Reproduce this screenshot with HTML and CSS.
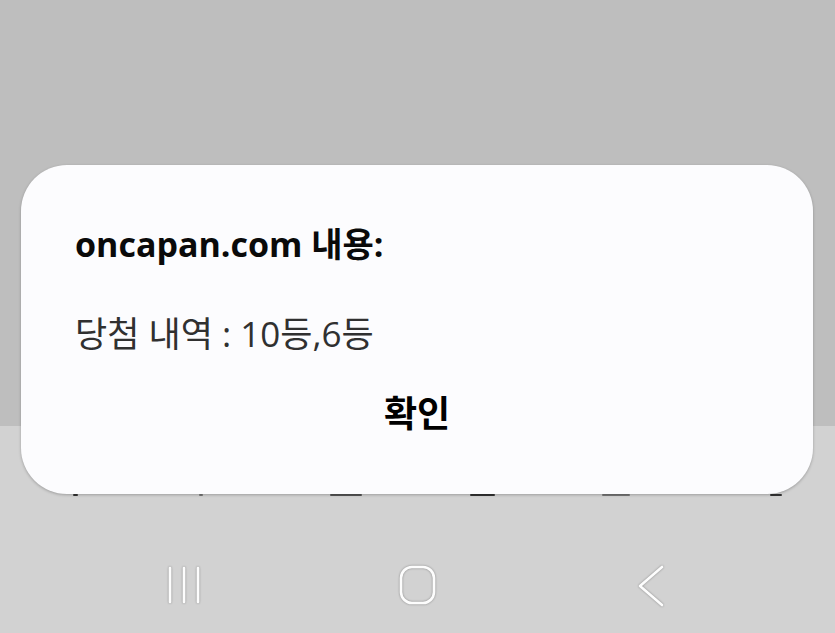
FILE: index.html
```html
<!DOCTYPE html>
<html lang="ko">

<head>
    <meta charset="UTF-8">
    <meta name="viewport" content="width=device-width, initial-scale=1.0">
    <title>oncapan.com</title>
    <link rel="stylesheet" href="styles.css">
</head>

<body>
    <div class="screen">
        <div class="page-top"></div>
        <div class="page-bottom">
            <div class="page-row">
                <span class="mark m1"></span>
                <span class="mark m2"></span>
                <span class="mark m3"></span>
                <span class="mark m4"></span>
                <span class="mark m5"></span>
                <span class="mark m6"></span>
            </div>
            <nav class="navbar">
                <div class="nav-btn">
                    <svg width="36" height="44" viewBox="0 0 36 44">
                        <path d="M4 4v34M18 4v34M32 4v34" />
                    </svg>
                </div>
                <div class="nav-btn">
                    <svg width="44" height="46" viewBox="0 0 44 46">
                        <rect x="5" y="3" width="33" height="36" rx="11" />
                    </svg>
                </div>
                <div class="nav-btn">
                    <svg width="36" height="46" viewBox="0 0 36 46">
                        <path d="M28 3L6 22l22 19" />
                    </svg>
                </div>
            </nav>
        </div>

        <!-- alert dialog -->
        <div class="dialog">
            <div class="dialog-title">oncapan.com 내용:</div>
            <div class="dialog-msg">당첨 내역 : 10등,6등</div>
            <div class="dialog-actions">
                <button class="ok-btn">확인</button>
            </div>
        </div>
    </div>
</body>

</html>
```

FILE: styles.css
```css
* {
    box-sizing: border-box;
}

body {
    margin: 0;
    font-family: "Open Sans", "Noto Sans CJK KR", sans-serif;
}

.screen {
    position: relative;
    width: 835px;
    height: 633px;
    overflow: hidden;
    display: flex;
    flex-direction: column;
}

.page-top {
    height: 426px;
    background-color: #bebebe;
}

.page-bottom {
    flex: 1;
    background-color: #d2d2d2;
    display: flex;
    flex-direction: column;
}

/* bits of the page text peeking out below the dialog */
.page-row {
    position: relative;
    height: 30px;
    margin-top: 68px;
}

.mark {
    position: absolute;
    top: 0;
    height: 2px;
    background-color: #333;
    border-radius: 1px;
}

.m1 { left: 73px; width: 5px; }
.m2 { left: 199px; width: 4px; background-color: #777; }
.m3 { left: 330px; width: 32px; background-color: #555; }
.m4 { left: 470px; width: 25px; }
.m5 { left: 602px; width: 28px; background-color: #777; }
.m6 { left: 770px; width: 12px; }

.navbar {
    display: grid;
    grid-template-columns: repeat(3, 234px);
    padding: 0 67px;
    margin-top: 40px;
}

.nav-btn {
    display: flex;
    justify-content: center;
}

.nav-btn svg {
    fill: none;
    stroke: #fdfdfd;
    stroke-width: 2.6;
    stroke-linecap: round;
    stroke-linejoin: round;
    filter: drop-shadow(0 0 1px rgba(0, 0, 0, 0.35));
}

.dialog {
    position: absolute;
    left: 21px;
    top: 165px;
    width: 792px;
    height: 329px;
    background-color: #fcfcfe;
    border-radius: 46px;
    box-shadow: 0 1px 3px rgba(0, 0, 0, 0.25);
    padding: 57px 54px 0;
    display: flex;
    flex-direction: column;
}

.dialog-title {
    font-size: 34px;
    font-weight: bold;
    color: #0a0a0a;
    line-height: 44px;
}

.dialog-msg {
    margin-top: 46px;
    font-size: 35px;
    color: #303030;
    line-height: 44px;
}

.dialog-actions {
    display: flex;
    justify-content: center;
    margin-top: 33px;
}

.ok-btn {
    border: none;
    background: none;
    padding: 0;
    font-family: "Noto Sans CJK KR", sans-serif;
    font-size: 36px;
    font-weight: bold;
    color: #000;
    line-height: 44px;
}
```
